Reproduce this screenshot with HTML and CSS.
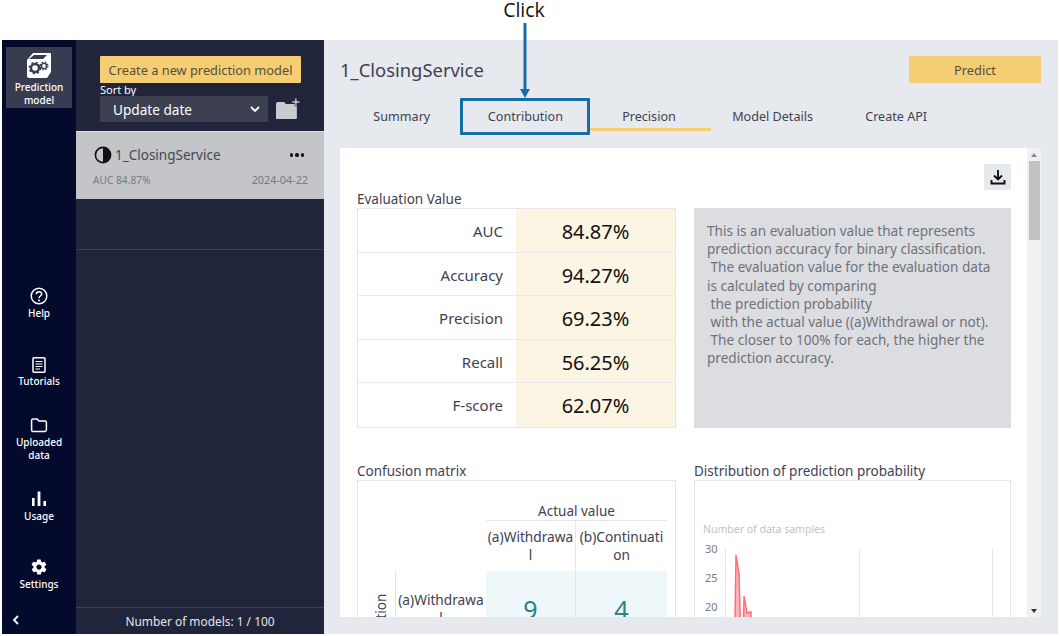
FILE: index.html
```html
<!DOCTYPE html>
<html>
<head>
    <title>Prediction model</title>
    <link rel="stylesheet" href="styles.css">
</head>
<body>
    <div class="topbar">Click</div>

    <div class="app">
        <nav class="rail">
            <a class="rail-item active">
                <svg class="cube" width="26" height="27" viewBox="0 0 26 27">
                    <path d="M1 8 L7 1 H24 Q25 1 25 2 V20 L21 26 H3 Q1 26 1 24 Z" fill="#fff"/>
                    <path d="M3 7 L8 3 H21 L17 7 Z" fill="#383c50"/>
                    <circle cx="9" cy="16" r="4" fill="none" stroke="#383c50" stroke-width="2.4"/>
                    <circle cx="9" cy="16" r="5.6" fill="none" stroke="#383c50" stroke-width="1.6" stroke-dasharray="2 2.4"/>
                    <circle cx="18" cy="14" r="2.6" fill="none" stroke="#383c50" stroke-width="1.4"/>
                    <circle cx="18" cy="14" r="3.9" fill="none" stroke="#383c50" stroke-width="1.2" stroke-dasharray="1.5 1.6"/>
                </svg>
                <span>Prediction<br>model</span>
            </a>

            <a class="rail-item help">
                <svg width="18" height="18" viewBox="0 0 18 18" fill="none" stroke="#fff">
                    <circle cx="9" cy="9" r="7.8" stroke-width="1.5"/>
                    <path d="M6.4 7.2 C6.4 3.9 11.7 4 11.7 7 C11.7 9 9 9 9 11.2" stroke-width="1.5"/>
                    <circle cx="9" cy="13.5" r="1" fill="#fff" stroke="none"/>
                </svg>
                <span>Help</span>
            </a>
            <a class="rail-item tutorials">
                <svg width="18" height="18" viewBox="0 0 18 18" fill="none" stroke="#fff">
                    <rect x="3" y="1.8" width="12" height="14.4" rx="1" stroke-width="1.5"/>
                    <path d="M5.5 5.5 H12.5 M5.5 8 H12.5 M5.5 10.5 H12.5 M5.5 13 H10" stroke-width="1.2"/>
                </svg>
                <span>Tutorials</span>
            </a>
            <a class="rail-item uploaded">
                <svg width="18" height="18" viewBox="0 0 18 18" fill="none" stroke="#fff">
                    <path d="M1.6 4.5 Q1.6 3 3 3 H7 L9 5 H15 Q16.4 5 16.4 6.4 V14 Q16.4 15.4 15 15.4 H3 Q1.6 15.4 1.6 14 Z" stroke-width="1.5"/>
                </svg>
                <span>Uploaded<br>data</span>
            </a>
            <a class="rail-item usage">
                <svg width="18" height="18" viewBox="0 0 18 18" fill="#fff">
                    <rect x="2" y="8" width="2.6" height="8"/>
                    <rect x="7.6" y="1.5" width="2.8" height="14.5"/>
                    <rect x="13.4" y="11" width="2.6" height="5"/>
                </svg>
                <span>Usage</span>
            </a>
            <a class="rail-item settings">
                <svg width="18" height="18" viewBox="0 0 24 24" fill="#fff">
                    <path d="M19.4 13c.1-.3.1-.7.1-1s0-.7-.1-1l2.1-1.6c.2-.2.2-.4.1-.6l-2-3.500c-.1-.2-.4-.3-.6-.2l-2.500 1c-.5-.4-1.100-.7-1.700-1l-.4-2.600c0-.2-.2-.4-.5-.4h-4c-.2 0-.4.2-.5.400l-.4 2.600c-.6.300-1.200.6-1.700 1l-2.500-1c-.2-.1-.5 0-.6.200l-2 3.500c-.1.200-.1.500.1.600L4.600 11c-.1.300-.1.700-.1 1s0 .7.100 1l-2.100 1.600c-.2.200-.2.400-.1.600l2 3.500c.1.200.4.300.6.200l2.500-1c.5.400 1.100.7 1.700 1l.4 2.600c0 .2.300.4.500.4h4c.2 0 .5-.2.500-.4l.4-2.600c.6-.3 1.200-.6 1.700-1l2.500 1c.2.100.5 0 .6-.2l2-3.500c.1-.2.1-.4-.1-.6L19.400 13zM12 15.500c-1.900 0-3.500-1.600-3.500-3.500s1.600-3.500 3.500-3.500 3.500 1.600 3.500 3.500-1.600 3.500-3.500 3.500z"/>
                </svg>
                <span>Settings</span>
            </a>
            <div class="rail-collapse">
                <svg width="8" height="10" viewBox="0 0 8 10" fill="none" stroke="#fff" stroke-width="1.8"><path d="M6 1 L2 5 L6 9"/></svg>
            </div>
        </nav>

        <aside class="panel">
            <div class="panel-head">
                <button class="btn-yellow create">Create a new prediction model</button>
                <div class="sort-label">Sort by</div>
                <div class="sort-row">
                    <div class="sort-select">
                        <span>Update date</span>
                        <svg width="10" height="7" viewBox="0 0 10 7" fill="none" stroke="#fff" stroke-width="1.8"><path d="M1 1 L5 5 L9 1"/></svg>
                    </div>
                    <svg class="new-folder" width="26" height="22" viewBox="0 0 26 22" fill="#c9cbce">
                        <path d="M1 6 Q1 4 3 4 H9 L11 6 H22 V20 Q22 21 21 21 H2 Q1 21 1 20 Z"/>
                        <path d="M20 0 H22 V3 H25 V5 H22 V8 H20 V5 H17 V3 H20 Z" stroke="#20253b" stroke-width=".6"/>
                    </svg>
                </div>
            </div>

            <div class="model-item">
                <div class="model-top">
                    <svg width="18" height="18" viewBox="0 0 18 18">
                        <circle cx="9" cy="9" r="7.6" fill="#c3c5c9" stroke="#111" stroke-width="1.6"/>
                        <path d="M9 1.400 A7.600 7.600 0 0 1 9 16.600 Z" fill="#111"/>
                    </svg>
                    <span class="model-name">1_ClosingService</span>
                    <span class="model-more"><i></i><i></i><i></i></span>
                </div>
                <div class="model-meta">
                    <span>AUC 84.87%</span>
                    <span class="model-date">2024-04-22</span>
                </div>
            </div>
            <div class="model-empty"></div>

            <div class="panel-foot">Number of models: 1 / 100</div>
        </aside>

        <main class="main">
            <div class="main-head">
                <h1>1_ClosingService</h1>
                <button class="btn-yellow predict">Predict</button>
            </div>

            <div class="tabs">
                <div class="tab">Summary</div>
                <div class="tab">Contribution</div>
                <div class="tab current">Precision</div>
                <div class="tab">Model Details</div>
                <div class="tab">Create API</div>
            </div>

            <section class="card">
                <div class="card-body">
                    <div class="tool-row">
                        <div class="download">
                            <svg width="18" height="18" viewBox="0 0 18 18" fill="none" stroke="#111" stroke-width="1.900">
                                <path d="M9 2 V11 M5 7.500 L9 11.500 L13 7.500"/>
                                <path d="M2.500 12 V15.500 H15.500 V12"/>
                            </svg>
                        </div>
                    </div>

                    <div class="two-col">
                        <div class="col">
                            <div class="col-title">Evaluation Value</div>
                            <div class="metrics">
                                <div class="metric"><span class="metric-name">AUC</span><span class="metric-value">84.87%</span></div>
                                <div class="metric"><span class="metric-name">Accuracy</span><span class="metric-value">94.27%</span></div>
                                <div class="metric"><span class="metric-name">Precision</span><span class="metric-value">69.23%</span></div>
                                <div class="metric"><span class="metric-name">Recall</span><span class="metric-value">56.25%</span></div>
                                <div class="metric"><span class="metric-name">F-score</span><span class="metric-value">62.07%</span></div>
                            </div>
                        </div>
                        <div class="col">
                            <div class="col-title">&nbsp;</div>
                            <div class="explain">This is an evaluation value that represents prediction accuracy for binary classification.<br>
&nbsp;The evaluation value for the evaluation data is calculated by comparing<br>
&nbsp;the prediction probability<br>
&nbsp;with the actual value ((a)Withdrawal or not).<br>
&nbsp;The closer to 100% for each, the higher the prediction accuracy.</div>
                        </div>
                    </div>

                    <div class="two-col lower">
                        <div class="col">
                            <div class="col-title">Confusion matrix</div>
                            <div class="box matrix">
                                <div class="matrix-side">
                                    <div class="side-title"><span>Prediction</span></div>
                                    <div class="side-label">(a)Withdrawal</div>
                                </div>
                                <div class="matrix-table">
                                    <div class="actual">Actual value</div>
                                    <div class="matrix-heads">
                                        <div>(a)Withdrawal</div>
                                        <div>(b)Continuation</div>
                                    </div>
                                    <div class="matrix-cells">
                                        <div>9</div>
                                        <div>4</div>
                                    </div>
                                </div>
                            </div>
                        </div>
                        <div class="col">
                            <div class="col-title">Distribution of prediction probability</div>
                            <div class="box chart">
                                <svg width="315" height="200" viewBox="0 0 315 200">
                                    <text class="axis-title" x="8" y="52">Number of data samples</text>
                                    <text class="axis-num" x="10" y="72">30</text>
                                    <text class="axis-num" x="10" y="101">25</text>
                                    <text class="axis-num" x="10" y="130">20</text>
                                    <path d="M30.500 68 V200 M164.500 68 V200 M297.500 68 V200" stroke="#e6e6e6" fill="none"/>
                                    <path d="M39 200 L41 74 L44 92 L47 200 L47.500 200 L49 115 L52 132 L56 131 V200 Z" fill="#ffb4b8" stroke="#ff6a72" stroke-width="1.400"/>
                                </svg>
                            </div>
                        </div>
                    </div>
                </div>

                <div class="scrollbar">
                    <svg width="14" height="13" viewBox="0 0 14 13" fill="#8a8a8a"><path d="M4 9 L7 5 L10 9 Z"/></svg>
                    <div class="thumb"></div>
                    <svg width="14" height="13" viewBox="0 0 14 13" fill="#333"><path d="M4 5 L10 5 L7 9 Z"/></svg>
                </div>
            </section>
        </main>

        <!-- callout on top of the tabs -->
        <div class="callout-box"></div>
        <svg class="callout-arrow" width="12" height="76" viewBox="0 0 12 76" fill="#146ea5">
            <rect x="4.500" y="0" width="3" height="68"/>
            <path d="M1 66 H11 L6 75 Z"/>
        </svg>
    </div>
</body>
</html>
```

FILE: styles.css
```css
* {
    margin: 0;
    padding: 0;
    box-sizing: border-box;
}

body {
    width: 1060px;
    height: 636px;
    overflow: hidden;
    background-color: #fff;
    color: #3f4250;
    font-family: "Noto Sans", "Open Sans", sans-serif;
    position: relative;
}

.topbar {
    height: 40px;
    text-align: center;
    font-family: "Open Sans", sans-serif;
    font-size: 19.500px;
    line-height: 20px;
    color: #111;
    width: 1048px;
}

.app {
    display: flex;
    height: 594px;
    margin: 0 2px;
}

/* left rail */
.rail {
    width: 74px;
    background-color: #030a2b;
    display: flex;
    flex-direction: column;
    align-items: center;
    color: #fff;
    font-size: 10px;
    font-weight: 500;
    line-height: 13px;
    flex-shrink: 0;
}

.rail-item {
    display: flex;
    flex-direction: column;
    align-items: center;
    text-align: center;
    gap: 2px;
}

.rail-item.active {
    width: 66px;
    height: 61px;
    margin-top: 7px;
    padding-top: 5px;
    background-color: #383c50;
}

.rail-item.help { margin-top: 179px; }
.rail-item.tutorials { margin-top: 36px; gap: 1px; }
.rail-item.uploaded { margin-top: 28px; }
.rail-item.usage { margin-top: 28px; }
.rail-item.settings { margin-top: 35px; }

.rail-collapse {
    align-self: flex-start;
    margin: 24px 0 0 10px;
}

/* model list panel */
.panel {
    width: 248px;
    background-color: #20253b;
    display: flex;
    flex-direction: column;
    color: #fff;
    flex-shrink: 0;
}

.panel-head {
    height: 91px;
    padding: 16px 23px 0 24px;
}

.btn-yellow {
    background-color: #f5cd73;
    border: none;
    border-radius: 1px;
    color: #55503a;
    font-family: inherit;
    font-size: 12.800px;
    height: 27px;
}

.create {
    width: 201px;
    display: block;
}

.sort-label {
    font-size: 11px;
    line-height: 13px;
}

.sort-row {
    display: flex;
    align-items: flex-start;
    gap: 7px;
}

.sort-select {
    width: 169px;
    height: 26px;
    background-color: #3d4050;
    display: flex;
    justify-content: space-between;
    align-items: center;
    padding: 0 8px 0 13px;
    font-size: 13.600px;
}

.new-folder {
    margin-top: 2px;
}

.model-item {
    height: 68px;
    background-color: #c3c5c9;
    border-top: 1px solid #d8dadd;
    padding: 14px 16px 0 18px;
}

.model-top {
    display: flex;
    align-items: center;
    gap: 3px;
}

.model-name {
    flex: 1;
    font-size: 13.500px;
    line-height: 18px;
    color: #444750;
}

.model-more {
    display: flex;
    gap: 2px;
    margin-right: 4px;
}

.model-more i {
    width: 3.500px;
    height: 3.500px;
    border-radius: 50%;
    background-color: #111;
}

.model-meta {
    display: flex;
    justify-content: space-between;
    margin: 9px 0 0 -1px;
    font-size: 10.200px;
    line-height: 14px;
    color: #777a82;
}

.model-date {
    font-size: 10.800px;
}

.model-empty {
    flex: 1;
    background: linear-gradient(#3d4152, #3d4152) 0 50px / 100% 1px no-repeat;
}

.panel-foot {
    height: 27px;
    border-top: 1px solid #3d4152;
    text-align: center;
    font-size: 11.900px;
    line-height: 27px;
    color: #e4e5e8;
}

/* main area */
.main {
    flex: 1;
    min-width: 0;
    background-color: #e6e9ee;
    padding: 0 17px 17px 16px;
    display: flex;
    flex-direction: column;
}

.main-head {
    display: flex;
    justify-content: space-between;
    align-items: center;
    padding-top: 16px;
    height: 43px;
}

h1 {
    font-size: 18.400px;
    font-weight: normal;
    color: #3f4250;
}

.predict {
    width: 132px;
}

.tabs {
    display: grid;
    grid-template-columns: repeat(5, 123.600px);
    margin-top: 15px;
    height: 32px;
}

.tab {
    text-align: center;
    font-size: 12.600px;
    line-height: 37px;
    height: 32px;
    color: #3f4250;
}

.tab.current {
    border-bottom: 3px solid #f5cd73;
    height: 33px;
}

.card {
    flex: 1;
    min-height: 0;
    margin-top: 18px;
    background-color: #fff;
    display: flex;
    overflow: hidden;
}

.card-body {
    flex: 1;
    padding: 16px 16px 0 17px;
}

.tool-row {
    display: flex;
    justify-content: flex-end;
    height: 26px;
}

.download {
    width: 27px;
    height: 26px;
    background-color: #e6e9ee;
    display: flex;
    align-items: center;
    justify-content: center;
}

.two-col {
    display: grid;
    grid-template-columns: 319px 317px;
    column-gap: 18px;
}

.lower {
    margin-top: 34px;
}

.col-title {
    height: 18px;
    padding-top: 1px;
    font-size: 13.500px;
    line-height: 17px;
    color: #3f4250;
}

.metrics {
    border: 1px solid #e3e5e8;
    height: 220px;
    display: grid;
    grid-template-rows: repeat(5, 43.600px);
}

.metric {
    display: grid;
    grid-template-columns: 158px 1fr;
    grid-template-rows: minmax(0, 1fr);
    border-bottom: 1px solid #e8eaed;
    overflow: hidden;
}

.metric:last-child {
    border-bottom: none;
}

.metric-name {
    text-align: right;
    padding-right: 13px;
    font-size: 15px;
    line-height: 44px;
}

.metric-value {
    background-color: #fdf5e4;
    text-align: center;
    font-size: 20px;
    line-height: 45px;
    color: #111;
}

.explain {
    height: 220px;
    background-color: #dcdde1;
    padding: 14px 13px 0;
    font-size: 13.600px;
    line-height: 18.200px;
    color: #6f727c;
}

.box {
    border: 1px solid #e3e5e8;
    height: 200px;
}

.matrix {
    display: flex;
    padding: 0 8px 0 15px;
}

.matrix-side {
    width: 114px;
    padding-top: 90px;
    display: flex;
}

.side-title {
    width: 22px;
    height: 87px;
    margin-top: 23px;
    writing-mode: vertical-rl;
    transform: rotate(180deg);
    font-size: 13.500px;
    line-height: 16px;
    text-align: right;
    color: #3f4250;
    white-space: nowrap;
}

.side-label {
    flex: 1;
    border-left: 1px solid #e3e5e8;
    padding: 20px 2px 0;
    font-size: 13.700px;
    line-height: 18px;
    text-align: center;
    word-break: break-all;
}

.matrix-table {
    flex: 1;
}

.actual {
    height: 40px;
    border-bottom: 1px solid #e3e5e8;
    text-align: center;
    font-size: 13.500px;
    line-height: 18px;
    padding-top: 21px;
}

.matrix-heads,
.matrix-cells {
    display: grid;
    grid-template-columns: 90px 91px;
}

.matrix-heads {
    height: 50px;
}

.matrix-heads div {
    text-align: center;
    font-size: 13.700px;
    line-height: 18px;
    padding: 7px 1px 0;
    word-break: break-all;
}

.matrix-heads div:first-child,
.matrix-cells div:first-child {
    border-right: 1px solid #e3e5e8;
}

.matrix-cells div {
    height: 80px;
    background-color: #eef7f9;
    text-align: center;
    font-size: 25px;
    line-height: 34px;
    padding-top: 21px;
    color: #2e7f87;
}

.axis-title {
    font-size: 10.500px;
    fill: #c0c3cb;
}

.axis-num {
    font-size: 11px;
    fill: #777a82;
}

/* scrollbar */
.scrollbar {
    width: 14px;
    background-color: #f1f1f1;
    display: flex;
    flex-direction: column;
    align-items: center;
}

.thumb {
    width: 11px;
    height: 79px;
    background-color: #c1c1c1;
    margin-right: -1px;
}

.scrollbar svg:last-child {
    margin-top: auto;
}

/* click callout */
.callout-box {
    position: absolute;
    left: 460px;
    top: 98px;
    width: 130px;
    height: 37px;
    border: 3px solid #146ea5;
    border-radius: 1px;
}

.callout-arrow {
    position: absolute;
    left: 519px;
    top: 23px;
}
```
